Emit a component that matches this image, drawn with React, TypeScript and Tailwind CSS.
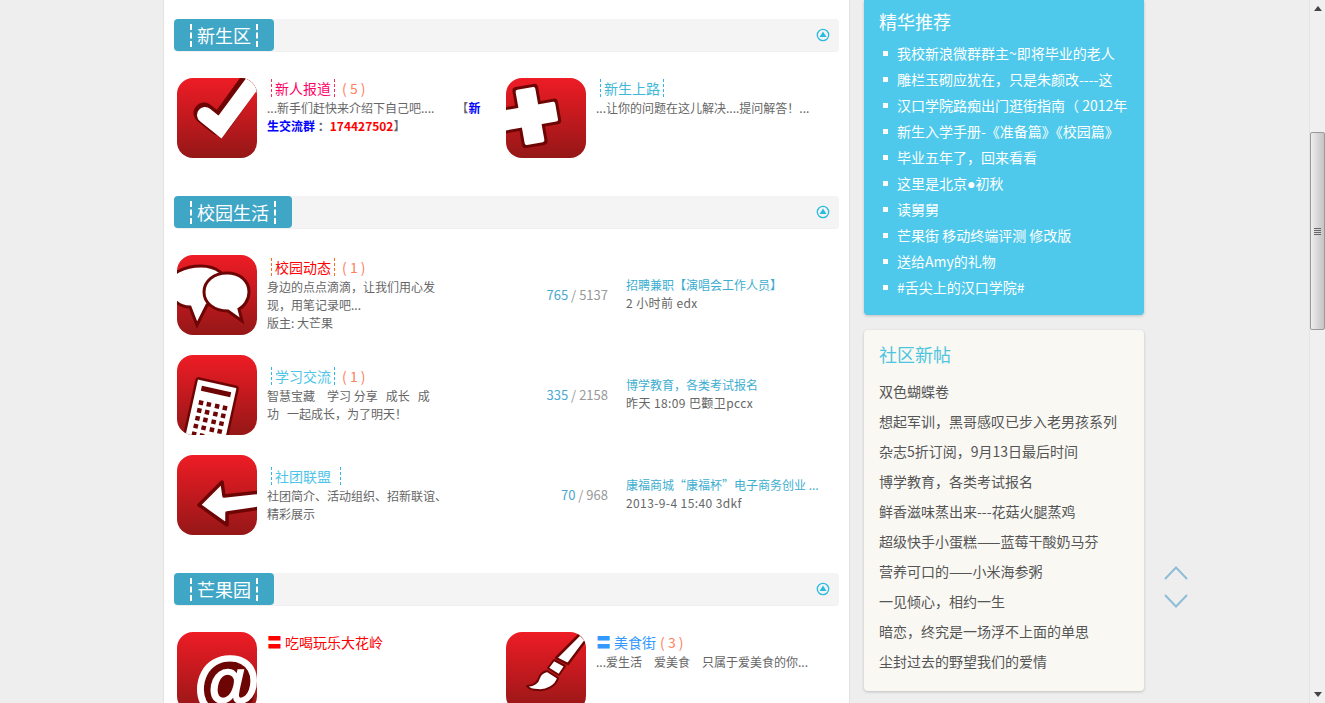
import React from 'react';

type IconKind = 'check' | 'plus' | 'chat' | 'calc' | 'arrow' | 'at' | 'brush';

const DARK = '#6e0505';

const IconArt: React.FC<{ kind: IconKind }> = ({ kind }) => {
  switch (kind) {
    case 'check':
      return (
        <>
          <polyline points="27,35 42,47 78,-3" fill="none" stroke={DARK} strokeWidth="21" strokeLinejoin="round" strokeLinecap="round" />
          <polyline points="28,37 43,49 80,-1" fill="none" stroke="#fff" strokeWidth="16" strokeLinejoin="miter" strokeLinecap="round" />
        </>
      );
    case 'plus':
      return (
        <g transform="rotate(-10 24 38)">
          <rect x="-12" y="25" width="66" height="26" rx="4" fill={DARK} />
          <rect x="11" y="7" width="26" height="62" rx="4" fill={DARK} />
          <rect x="-12" y="28" width="63" height="20" rx="2" fill="#fff" />
          <rect x="14" y="10" width="20" height="56" rx="2" fill="#fff" />
        </g>
      );
    case 'chat':
      return (
        <>
          <path d="M-8 30 C-8 18 8 11 24 11 C40 11 50 20 50 31 C50 43 38 50 30 50 L20 70 L13 52 C0 52 -8 42 -8 30 Z" fill="#fff" stroke={DARK} strokeWidth="3" />
          <path d="M27 37 C27 26 37 18 50 18 C63 18 72 26 72 37 C72 46 66 52 62 54 L65 66 L51 56 C37 56 27 48 27 37 Z" fill="#fff" stroke={DARK} strokeWidth="3" />
        </>
      );
    case 'calc':
      return (
        <g transform="translate(20 23) rotate(12.5)">
          <rect x="0" y="0" width="42" height="80" rx="2" fill="#fff" stroke={DARK} strokeWidth="2.5" />
          <rect x="6.5" y="6.5" width="30" height="5" fill={DARK} />
          {[21, 29, 37, 45, 53].map((y) =>
            [7, 15, 23.5, 31.5].map((x) => <rect key={`${x}-${y}`} x={x} y={y} width="4.5" height="4.5" fill={DARK} />),
          )}
        </g>
      );
    case 'arrow':
      return (
        <polygon
          points="22,50 45,27 47,41 84,37 84,53 50,58 50,70"
          fill="#fff"
          stroke={DARK}
          strokeWidth="3.5"
          strokeLinejoin="round"
        />
      );
    case 'at':
      return (
        <>
          <circle cx="49" cy="57" r="29" fill={DARK} />
          <text
            x="49"
            y="74"
            textAnchor="middle"
            fontFamily="'Liberation Sans', sans-serif"
            fontWeight="700"
            fontStyle="italic"
            fontSize="68"
            fill="#fff"
            stroke="#fff"
            strokeWidth="1.5"
          >
            @
          </text>
        </>
      );
    case 'brush':
      return (
        <>
          <path d="M50 26 L74 2 L80 8 L62 32 Z" fill="#fff" stroke={DARK} strokeWidth="2.5" strokeLinejoin="round" />
          <path d="M48 28 L59 34 L53 43 L42 36 Z" fill="#fff" stroke={DARK} strokeWidth="2" strokeLinejoin="round" />
          <path d="M41 39 L52 46 C50 54 40 59 32 58 C27 58 23 57 21 54 C28 54 32 50 33 46 C34 43 37 40 41 39 Z" fill="#fff" stroke={DARK} strokeWidth="2" strokeLinejoin="round" />
        </>
      );
  }
};

const ForumIcon: React.FC<{ kind: IconKind; id: string }> = ({ kind, id }) => (
  <svg viewBox="0 0 80 80" className="ml-[3px] h-[80px] w-[80px] shrink-0 rounded-[16px]">
    <defs>
      <linearGradient id={id} x1="0" y1="0" x2="0" y2="1">
        <stop offset="0" stopColor="#ee1c25" />
        <stop offset="1" stopColor="#951717" />
      </linearGradient>
    </defs>
    <rect width="80" height="80" fill={`url(#${id})`} />
    <IconArt kind={kind} />
  </svg>
);

const ForumTitle: React.FC<{ name: string; color: string; dash: string; count?: number }> = ({ name, color, dash, count }) => (
  <div className="flex h-[19px] items-center pb-[2px] text-[14px] leading-[18px]">
    <span className={`ml-[4px] whitespace-pre border-x border-dashed px-[3px] ${color} ${dash}`}>{name}</span>
    {count !== undefined && <span className="ml-[7px] text-[14px] text-[#ff7f5f]">( {count} )</span>}
  </div>
);

const SectionHeader: React.FC<{ title: string }> = ({ title }) => (
  <div className="flex h-[33px] items-start justify-between rounded-[4px] border-b border-[#f0f0f0] bg-[#f4f4f4]">
    <div className="flex h-[32px] items-center rounded-[4px] bg-[#40a6c6] px-[16px] text-[18px] text-white">
      <span className="border-x-2 border-dashed border-white px-[5px] leading-[23px]">{title}</span>
    </div>
    <svg viewBox="0 0 14 14" className="mr-[9px] mt-[9px] h-[14px] w-[14px]">
      <circle cx="7" cy="7" r="5.7" fill="none" stroke="#2cbbe0" strokeWidth="1.3" />
      <polygon points="7,3.5 10.5,9 3.5,9" fill="#2cbbe0" />
    </svg>
  </div>
);

const listRows = [
  {
    kind: 'chat' as IconKind,
    name: '校园动态',
    color: 'text-[#ff0000]',
    dash: 'border-[#ff6a1c]',
    count: 1,
    desc: ['身边的点点滴滴，让我们用心发', '现，用笔记录吧...', '版主: 大芒果'],
    topics: '765',
    posts: '5137',
    last: '招聘兼职【演唱会工作人员】',
    when: '2 小时前 edx',
  },
  {
    kind: 'calc' as IconKind,
    name: '学习交流',
    color: 'text-[#4ec5e8]',
    dash: 'border-[#2fb8e4]',
    count: 1,
    desc: ['智慧宝藏　学习 分享\u2002\u2006成长\u2002\u2006成', '功\u2002\u2006一起成长，为了明天！'],
    topics: '335',
    posts: '2158',
    last: '博学教育，各类考试报名',
    when: '昨天 18:09 巴颧卫pccx',
  },
  {
    kind: 'arrow' as IconKind,
    name: '社团联盟  ',
    color: 'text-[#4ec5e8]',
    dash: 'border-[#2fb8e4]',
    desc: ['社团简介、活动组织、招新联谊、', '精彩展示'],
    topics: '70',
    posts: '968',
    last: '康福商城“康福杯”电子商务创业 ...',
    when: '2013-9-4 15:40 3dkf',
  },
];

const featured = [
  '我校新浪微群群主~即将毕业的老人',
  '雕栏玉砌应犹在，只是朱颜改----这',
  '汉口学院路痴出门逛街指南（ 2012年',
  '新生入学手册-《准备篇》《校园篇》',
  '毕业五年了，回来看看',
  <>这里是北京<span className="font-['Liberation_Sans'] leading-none">●</span>初秋</>,
  '读舅舅',
  '芒果街 移动终端评测 修改版',
  '送给Amy的礼物',
  '#舌尖上的汉口学院#',
];

const newPosts = [
  '双色蝴蝶卷',
  '想起军训，黑哥感叹已步入老男孩系列',
  '杂志5折订阅，9月13日最后时间',
  '博学教育，各类考试报名',
  '鲜香滋味蒸出来---花菇火腿蒸鸡',
  '超级快手小蛋糕——蓝莓干酸奶马芬',
  '营养可口的——小米海参粥',
  '一见倾心，相约一生',
  '暗恋，终究是一场浮不上面的单思',
  '尘封过去的野望我们的爱情',
];

const App: React.FC = () => {
  return (
    <div className="relative flex h-[703px] w-[1325px] overflow-hidden bg-[#eeeeee] font-['Noto_Sans_CJK_SC','Noto_Sans',sans-serif] text-[12px] text-[#666]">
      {/* Main column */}
      <main className="ml-[163px] h-[703px] w-[687px] shrink-0 overflow-hidden border-x border-[#e2e2e2] bg-white px-[10px] pt-[19px]">
        <SectionHeader title="新生区" />
        <div className="mt-[26px] flex">
          <div className="flex w-[329px]">
            <ForumIcon kind="check" id="g1" />
            <div className="ml-[10px] w-[215px] pt-[2px] leading-[18px]">
              <div className="-mt-px mb-px">
                <ForumTitle name="新人报道" color="text-[#ff0066]" dash="border-[#ff2d55]" count={5} />
              </div>
              <p>
                ...新手们赶快来介绍下自己吧....　　<span className="ml-[4px]">【</span>
                <b className="text-[#0000ff]">新生交流群</b> <b>：</b><b className="text-[#ff0000]">174427502</b>】
              </p>
            </div>
          </div>
          <div className="flex">
            <ForumIcon kind="plus" id="g2" />
            <div className="ml-[10px] pt-[2px] leading-[18px]">
              <div className="-mt-px mb-px">
                <ForumTitle name="新生上路" color="text-[#3fb8d8]" dash="border-[#2fb8e4]" />
              </div>
              <p>...让你的问题在这儿解决....提问解答！...</p>
            </div>
          </div>
        </div>

        <div className="mt-[38px]">
          <SectionHeader title="校园生活" />
        </div>
        <div className="mt-[26px] flex flex-col gap-[20px]">
          {listRows.map((row, i) => (
            <div key={row.name} className="flex h-[80px] items-center">
              <ForumIcon kind={row.kind} id={`l${i}`} />
              <div className="ml-[10px] w-[170px] leading-[18px]">
                <ForumTitle name={row.name} color={row.color} dash={row.dash} count={row.count} />
                {row.desc.map((line) => (
                  <p key={line} className="whitespace-nowrap">{line}</p>
                ))}
              </div>
              <div className="w-[171px] text-right text-[13px] text-[#999]">
                <span className="text-[#4aa8d0]">{row.topics}</span> / {row.posts}
              </div>
              <div className="mb-[2px] ml-[18px] leading-[18px]">
                <p className="text-[#3eaecf]">{row.last}</p>
                <p className="tracking-[0.4px]">{row.when}</p>
              </div>
            </div>
          ))}
        </div>

        <div className="mt-[38px]">
          <SectionHeader title="芒果园" />
        </div>
        <div className="mt-[26px] flex">
          <div className="flex w-[329px]">
            <ForumIcon kind="at" id="g3" />
            <div className="ml-[10px] pt-[2px] leading-[18px]">
              <div className="flex h-[19px] items-center pb-[4px] text-[14px] text-[#ff0000]">
                <span className="text-[15px] font-black">〓</span>
                <span className="ml-[3px]">吃喝玩乐大花岭</span>
              </div>
            </div>
          </div>
          <div className="flex">
            <ForumIcon kind="brush" id="g4" />
            <div className="ml-[10px] pt-[2px] leading-[18px]">
              <div className="flex h-[19px] items-center pb-[4px] text-[14px] text-[#3399ff]">
                <span className="text-[15px] font-black">〓</span>
                <span className="ml-[3px]">美食街</span>
                <span className="ml-[4px] text-[14px] text-[#ff7f5f]">( 3 )</span>
              </div>
              <p>...爱生活　爱美食　只属于爱美食的你...</p>
            </div>
          </div>
        </div>
      </main>

      {/* Sidebar */}
      <aside className="ml-[14px] w-[280px] shrink-0">
        <section className="rounded-b-[4px] bg-[#4ec9eb] px-[15px] pb-[15px] pt-[7px] text-white shadow-[0_1px_3px_rgba(0,0,0,0.2)]">
          <h3 className="text-[18px] leading-[28px]">精华推荐</h3>
          <ul className="mt-[5px]">
            {featured.map((item, i) => (
              <li key={i} className="flex h-[26px] items-center text-[14px]">
                <span className="ml-[4px] h-[5px] w-[5px] shrink-0 bg-white" />
                <span className="ml-[9px] w-[233px] overflow-hidden whitespace-nowrap">{item}</span>
              </li>
            ))}
          </ul>
        </section>
        <section className="mt-[15px] rounded-[4px] bg-[#f9f8f3] px-[15px] pb-[15px] pt-[10px] shadow-[0_1px_3px_rgba(0,0,0,0.2)]">
          <h3 className="text-[18px] leading-[28px] text-[#4ec5e0]">社区新帖</h3>
          <ul className="mt-[8px] text-[14px] leading-[30px] text-[#555]">
            {newPosts.map((item) => (
              <li key={item}>{item}</li>
            ))}
          </ul>
        </section>
      </aside>

      {/* Prev / next overlay */}
      <svg viewBox="0 0 24 42" className="absolute left-[1164px] top-[566px] h-[42px] w-[24px]">
        <polyline points="1,13 12,1.5 23,13" fill="none" stroke="#8fbdd6" strokeWidth="2" />
        <polyline points="1,29 12,40.5 23,29" fill="none" stroke="#8fbdd6" strokeWidth="2" />
      </svg>

      {/* Scrollbar */}
      <div className="absolute right-0 top-0 flex h-[703px] w-[16px] flex-col items-center border-l border-[#e4e4e4] bg-[#f0f0f0]">
        <svg viewBox="0 0 8 5" className="mt-[6px] h-[5px] w-[8px]">
          <polygon points="4,0 8,5 0,5" fill="#444" />
        </svg>
        <div className="relative mt-[121px] flex h-[198px] w-[15px] items-center justify-center rounded-[2px] border border-[#999] bg-gradient-to-r from-[#eeeeee] via-[#d8d8d8] to-[#c4c4c4]">
          <div className="flex w-[7px] flex-col gap-[1px]">
            <span className="h-[1px] bg-[#666]" />
            <span className="h-[1px] bg-[#666]" />
            <span className="h-[1px] bg-[#666]" />
            <span className="h-[1px] bg-[#666]" />
          </div>
        </div>
        <svg viewBox="0 0 8 5" className="mt-auto mb-[6px] h-[5px] w-[8px]">
          <polygon points="0,0 8,0 4,5" fill="#444" />
        </svg>
      </div>
    </div>
  );
};

export default App;
